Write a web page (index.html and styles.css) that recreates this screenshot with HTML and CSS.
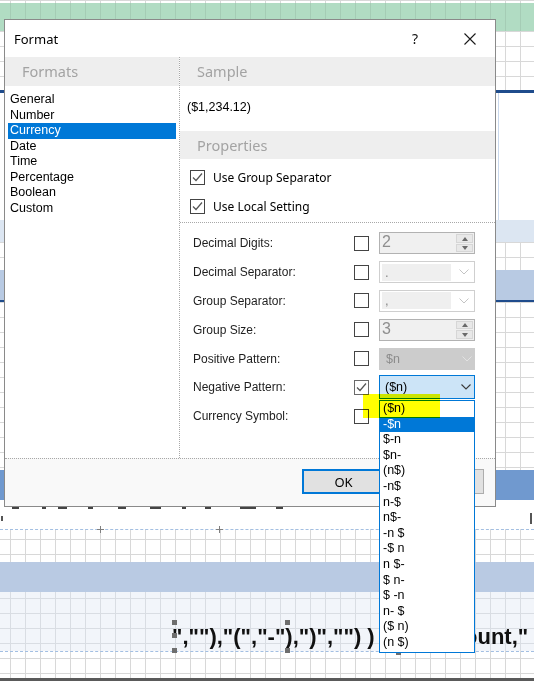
FILE: index.html
```html
<!DOCTYPE html>
<html lang="en">
<head>
<meta charset="utf-8">
<title>Format</title>
<link rel="stylesheet" href="styles.css">
</head>
<body>
<div class="canvas">
  <div class="band grid h3"></div>
  <div class="band green"></div>
  <div class="band grid h59"></div>
  <div class="band rule-dark"></div>
  <div class="band plain"></div>
  <div class="band lightblue"></div>
  <div class="band grid h28"></div>
  <div class="band blue"></div>
  <div class="band grid h168"></div>
  <div class="band midblue"></div>
  <div class="band strip"></div>
  <div class="band grid h32 dashed-top off9"></div>
  <div class="band blue2"></div>
  <div class="band light">
    <div class="formula"><span>",""),"(","-"),")","") )</span><span>ount,"</span></div>
  </div>
  <div class="band grid h26 dashed-top off6"></div>
  <div class="band rule-bottom"></div>
</div>

<span class="tick t1"></span>
<span class="tick t2"></span>
<span class="handle hd1"></span>
<span class="handle hd2"></span>
<span class="handle hd3"></span>
<span class="handle hd4"></span>
<span class="handle hd5"></span>
<span class="handle hd6"></span>

<div class="dialog">
  <div class="titlebar">
    <span class="title">Format</span>
    <span class="help">?</span>
    <span class="close"><svg width="12" height="12" viewBox="0 0 12 12"><path d="M0.5 0.5 L11.5 11.5 M11.5 0.5 L0.5 11.5" stroke="#1a1a1a" stroke-width="1.1" fill="none"/></svg></span>
  </div>
  <div class="main">
    <div class="formats">
      <div class="hdr">Formats</div>
      <ul class="fmt-list">
        <li>General</li>
        <li>Number</li>
        <li class="sel">Currency</li>
        <li>Date</li>
        <li>Time</li>
        <li>Percentage</li>
        <li>Boolean</li>
        <li>Custom</li>
      </ul>
    </div>
    <div class="props">
      <div class="hdr">Sample</div>
      <div class="sample">($1,234.12)</div>
      <div class="hdr prop-hdr">Properties</div>
      <div class="opt first"><span class="cb"><svg width="13" height="13" viewBox="0 0 13 13"><polyline points="2,6.5 5,9.5 11,2.5" stroke="#555" stroke-width="1.2" fill="none"/></svg></span><span class="opt-text">Use Group Separator</span></div>
      <div class="opt second"><span class="cb"><svg width="13" height="13" viewBox="0 0 13 13"><polyline points="2,6.5 5,9.5 11,2.5" stroke="#555" stroke-width="1.2" fill="none"/></svg></span><span class="opt-text">Use Local Setting</span></div>
      <div class="sep"></div>
      <div class="prop-grid">
        <span class="lbl">Decimal Digits:</span>
        <span class="cb"></span>
        <div class="spin"><span class="val">2</span><span class="spin-btns"><span class="up"></span><span class="dn"></span></span></div>

        <span class="lbl">Decimal Separator:</span>
        <span class="cb"></span>
        <div class="combo"><span class="field">.</span><svg class="chev" width="10" height="6" viewBox="0 0 10 6"><polyline points="0.5,0.5 5,5 9.5,0.5" stroke="#c4c4c4" stroke-width="1" fill="none"/></svg></div>

        <span class="lbl">Group Separator:</span>
        <span class="cb"></span>
        <div class="combo"><span class="field">,</span><svg class="chev" width="10" height="6" viewBox="0 0 10 6"><polyline points="0.5,0.5 5,5 9.5,0.5" stroke="#c4c4c4" stroke-width="1" fill="none"/></svg></div>

        <span class="lbl">Group Size:</span>
        <span class="cb"></span>
        <div class="spin"><span class="val">3</span><span class="spin-btns"><span class="up"></span><span class="dn"></span></span></div>

        <span class="lbl">Positive Pattern:</span>
        <span class="cb"></span>
        <div class="combo pos"><span class="text">$n</span><svg class="chev" width="10" height="6" viewBox="0 0 10 6"><polyline points="0.5,0.5 5,5 9.5,0.5" stroke="#e2e2e2" stroke-width="1" fill="none"/></svg></div>

        <span class="lbl">Negative Pattern:</span>
        <span class="cb dim"><svg width="13" height="13" viewBox="0 0 13 13"><polyline points="2,6.5 5,9.5 11,2.5" stroke="#555" stroke-width="1.2" fill="none"/></svg></span>
        <div class="combo active"><span class="text">($n)</span><svg class="chev" width="10" height="6" viewBox="0 0 10 6"><polyline points="0.5,0.5 5,5 9.5,0.5" stroke="#3a3a3a" stroke-width="1.1" fill="none"/></svg></div>

        <span class="lbl">Currency Symbol:</span>
        <span class="cb"></span>
        <span class="empty"></span>
      </div>
    </div>
  </div>
  <div class="footer">
    <button class="btn default">OK</button>
    <button class="btn">Cancel</button>
  </div>
</div>

<ul class="dropdown">
  <li>($n)</li>
  <li class="sel">-$n</li>
  <li>$-n</li>
  <li>$n-</li>
  <li>(n$)</li>
  <li>-n$</li>
  <li>n-$</li>
  <li>n$-</li>
  <li>-n $</li>
  <li>-$ n</li>
  <li>n $-</li>
  <li>$ n-</li>
  <li>$ -n</li>
  <li>n- $</li>
  <li>($ n)</li>
  <li>(n $)</li>
</ul>

<div class="highlight"></div>
</body>
</html>
```

FILE: styles.css
```css
html, body {
  margin: 0;
  padding: 0;
}

body {
  width: 534px;
  height: 681px;
  overflow: hidden;
  position: relative;
  background: #fff;
  font-family: "Liberation Sans", Arial, sans-serif;
  color: #000;
}

/* ---------- designer canvas ---------- */
.canvas {
  width: 534px;
  height: 681px;
  display: flex;
  flex-direction: column;
  overflow: hidden;
}

.band {
  flex: none;
  width: 100%;
}

.grid {
  background-color: #fff;
  background-image:
    linear-gradient(to right, #d8d8d8 1px, transparent 1px),
    linear-gradient(to bottom, #d8d8d8 1px, transparent 1px);
  background-size: 15px 15px;
  background-position: 10px 0;
}

.h3 { height: 3px; }
.h59 { height: 59px; }
.h28 { height: 28px; }
.h168 { height: 168px; }
.h32 { height: 32px; }
.h26 { height: 26px; }

.off9 { background-position: 10px 9px; }
.off6 { background-position: 10px 6px; }

.green {
  height: 28px;
  background-color: #b1dcc3;
  background-image: linear-gradient(to right, rgba(0, 0, 0, 0.07) 1px, transparent 1px);
  background-size: 15px 15px;
  background-position: 10px 0;
}

.rule-dark {
  height: 3px;
  background: #1f4c8c;
}

.plain {
  height: 127px;
  background: #fff linear-gradient(to right, transparent 498px, #c9d8ec 498px, #c9d8ec 499px, transparent 499px);
}

.lightblue {
  height: 22px;
  background: #dce6f2;
}

.blue {
  height: 30px;
  background: #b8cae3;
  border-bottom: 2px solid #1f4c8c;
}

.midblue {
  height: 30px;
  background: #7099cf;
}

/* strip just below the dialog: only the feet of a hidden text line show */
.strip {
  height: 29px;
  background-color: #fff;
  background-image:
    linear-gradient(#444, #444),
    linear-gradient(#444, #444),
    linear-gradient(#444, #444),
    linear-gradient(#444, #444),
    linear-gradient(#444, #444),
    linear-gradient(#444, #444),
    linear-gradient(#444, #444),
    linear-gradient(#444, #444),
    linear-gradient(#444, #444),
    linear-gradient(#444, #444),
    linear-gradient(#555, #555),
    linear-gradient(#555, #555);
  background-repeat: no-repeat;
  background-size:
    7px 2px, 4px 2px, 9px 2px, 5px 2px, 8px 2px,
    11px 2px, 4px 2px, 6px 2px, 16px 2px, 7px 2px,
    2px 5px, 2px 11px;
  background-position:
    12px 7px, 42px 7px, 58px 7px, 88px 7px, 118px 7px,
    150px 7px, 182px 7px, 205px 7px, 240px 7px, 276px 7px,
    1px 16px, 530px 13px;
}

.dashed-top {
  border-top: 1px dashed #a3bfe2;
}

.blue2 {
  height: 30px;
  background: #b9cae3;
}

.light {
  height: 59px;
  background-color: #f2f5fa;
  background-image:
    linear-gradient(to right, #d9dde3 1px, transparent 1px),
    linear-gradient(to bottom, #d9dde3 1px, transparent 1px);
  background-size: 15px 15px;
  background-position: 10px 6px;
}

.formula {
  display: grid;
  grid-template-columns: 292px max-content;
  padding-left: 172px;
  padding-top: 32px;
  font: bold 22px/26px "Liberation Sans", Arial, sans-serif;
  color: #111;
  white-space: nowrap;
}

.rule-bottom {
  height: 3px;
  background: #5a5a5a;
}

/* canvas marks */
.tick {
  position: absolute;
  width: 7px;
  height: 7px;
  background:
    linear-gradient(#808080, #808080) center / 7px 1px no-repeat,
    linear-gradient(#808080, #808080) center / 1px 7px no-repeat;
}
.t1 { left: 97px; top: 526px; }
.t2 { left: 216px; top: 526px; }

.handle {
  position: absolute;
  width: 5px;
  height: 5px;
  background: #6e6e6e;
}
.hd1 { left: 172px; top: 620px; }
.hd2 { left: 172px; top: 633px; }
.hd3 { left: 172px; top: 648px; }
.hd4 { left: 285px; top: 620px; }
.hd5 { left: 285px; top: 648px; }
.hd6 { left: 396px; top: 650px; }

/* ---------- dialog ---------- */
.dialog {
  position: absolute;
  left: 4px;
  top: 19px;
  width: 492px;
  height: 488px;
  box-sizing: border-box;
  border: 1px solid #8a8a8a;
  background: #fff;
  display: flex;
  flex-direction: column;
  z-index: 10;
}

.titlebar {
  height: 37px;
  flex: none;
  display: flex;
  align-items: center;
  padding-left: 9px;
  padding-right: 19px;
  font-family: "Noto Sans", "Open Sans", sans-serif;
}

.title {
  flex: 1;
  font-size: 13px;
  color: #000;
}

.help {
  width: 8px;
  text-align: center;
  font-size: 14px;
  margin-right: 45px;
  color: #111;
}

.close {
  width: 12px;
  height: 12px;
  display: flex;
}

.main {
  height: 401px;
  flex: none;
  display: flex;
}

.formats {
  width: 174px;
  flex: none;
  border-right: 1px dotted #a8a8a8;
}

.hdr {
  height: 29px;
  line-height: 29px;
  background: #eeeeee;
  padding-left: 17px;
  font-family: "Noto Sans", "Open Sans", sans-serif;
  font-size: 14.5px;
  color: #a3a3a3;
}

.fmt-list {
  list-style: none;
  margin: 6px 3px 0 3px;
  padding: 0;
  font-size: 12.5px;
}

.fmt-list li {
  height: 15.5px;
  line-height: 15.5px;
  padding-left: 2px;
  white-space: nowrap;
}

.fmt-list li.sel {
  background: #0078d7;
  color: #fff;
}

.props {
  flex: 1;
  display: flex;
  flex-direction: column;
}

.sample {
  margin-top: 13px;
  padding-left: 7px;
  font-size: 12.5px;
  line-height: 16px;
}

.prop-hdr {
  margin-top: 16px;
  height: 28px;
  line-height: 28px;
}

.opt {
  display: flex;
  align-items: center;
  height: 15px;
  padding-left: 10px;
  font-family: "Noto Sans", "Open Sans", sans-serif;
  font-size: 12px;
  color: #000;
}
.opt.first { margin-top: 11px; }
.opt.second { margin-top: 14px; }

.opt-text {
  margin-left: 8px;
}

.cb {
  width: 15px;
  height: 15px;
  box-sizing: border-box;
  border: 1px solid #444;
  background: #fff;
  display: flex;
  flex: none;
}
.cb.dim { border-color: #6a6a6a; }

.sep {
  margin-top: 8px;
  border-top: 1px dotted #a8a8a8;
}

.prop-grid {
  margin-top: 6px;
  padding-left: 13px;
  display: grid;
  grid-template-columns: 161px 25px 96px;
  grid-template-rows: repeat(7, 28.8px);
  align-items: center;
}

.lbl {
  font-size: 12px;
  color: #1e1e1e;
  white-space: nowrap;
}

/* spin box (disabled) */
.spin {
  width: 96px;
  height: 22px;
  box-sizing: border-box;
  border: 1px solid #b2b2b2;
  background: #f0f0f0;
  display: flex;
  padding: 1px;
}

.spin .val {
  flex: 1;
  padding-left: 1px;
  font-size: 16px;
  line-height: 15px;
  color: #8e8e8e;
}

.spin-btns {
  width: 17px;
  display: flex;
  flex-direction: column;
  gap: 1px;
}

.spin-btns span {
  flex: 1;
  box-sizing: border-box;
  background: #e8e8e8;
  border: 1px solid #d6d6d6;
  display: flex;
  align-items: center;
  justify-content: center;
}

.spin-btns .up::after {
  content: "";
  border-left: 3.5px solid transparent;
  border-right: 3.5px solid transparent;
  border-bottom: 4px solid #6a6a6a;
}

.spin-btns .dn::after {
  content: "";
  border-left: 3.5px solid transparent;
  border-right: 3.5px solid transparent;
  border-top: 4px solid #6a6a6a;
}

/* combo boxes */
.combo {
  width: 96px;
  height: 22px;
  box-sizing: border-box;
  border: 1px solid #cfcfcf;
  background: #fff;
  display: flex;
  align-items: center;
  padding: 2px;
}

.combo .field {
  width: 69px;
  height: 17px;
  background: #efefef;
  padding-left: 3px;
  box-sizing: border-box;
  font-size: 13px;
  line-height: 17px;
  color: #8a8a8a;
}

.combo .chev {
  margin-left: 8px;
}

.combo .text {
  width: 75px;
  padding-left: 4px;
  font-size: 12.5px;
}

.combo.pos {
  background: #cccccc;
  border-color: #cccccc;
}
.combo.pos .text { color: #8c8c8c; }
.combo.pos .chev { margin-left: 1px; }

.combo.active {
  height: 24px;
  background: #cce4f7;
  border-color: #0078d7;
}
.combo.active .text { color: #000; padding-left: 3px; }
.combo.active .chev { margin-left: 1px; }

/* footer */
.footer {
  flex: none;
  height: 48px;
  box-sizing: border-box;
  border-top: 1px dotted #a8a8a8;
  background: #f9f9f9;
  display: flex;
  justify-content: flex-end;
  align-items: flex-start;
  gap: 16px;
  padding: 10px 11px 0 0;
}

.btn {
  width: 83px;
  height: 25px;
  box-sizing: border-box;
  margin: 0;
  border: 1px solid #adadad;
  background: #e1e1e1;
  font-family: "Noto Sans", "Open Sans", sans-serif;
  font-size: 13px;
  color: #000;
  padding: 0;
}

.btn.default {
  border: 2px solid #0078d7;
}

/* ---------- dropdown list ---------- */
.dropdown {
  position: absolute;
  left: 379px;
  top: 400px;
  width: 96px;
  height: 253px;
  box-sizing: border-box;
  margin: 0;
  padding: 0;
  list-style: none;
  border: 1px solid #0078d7;
  background: #fff;
  z-index: 11;
  font-size: 12.5px;
}

.dropdown li {
  height: 15.6px;
  line-height: 15.6px;
  padding-left: 3px;
  white-space: nowrap;
}

.dropdown li.sel {
  background: #0078d7;
  color: #fff;
}

/* marker highlight */
.highlight {
  position: absolute;
  left: 363px;
  top: 394px;
  width: 77px;
  height: 24px;
  background: #ffff00;
  mix-blend-mode: multiply;
  z-index: 12;
}
```
